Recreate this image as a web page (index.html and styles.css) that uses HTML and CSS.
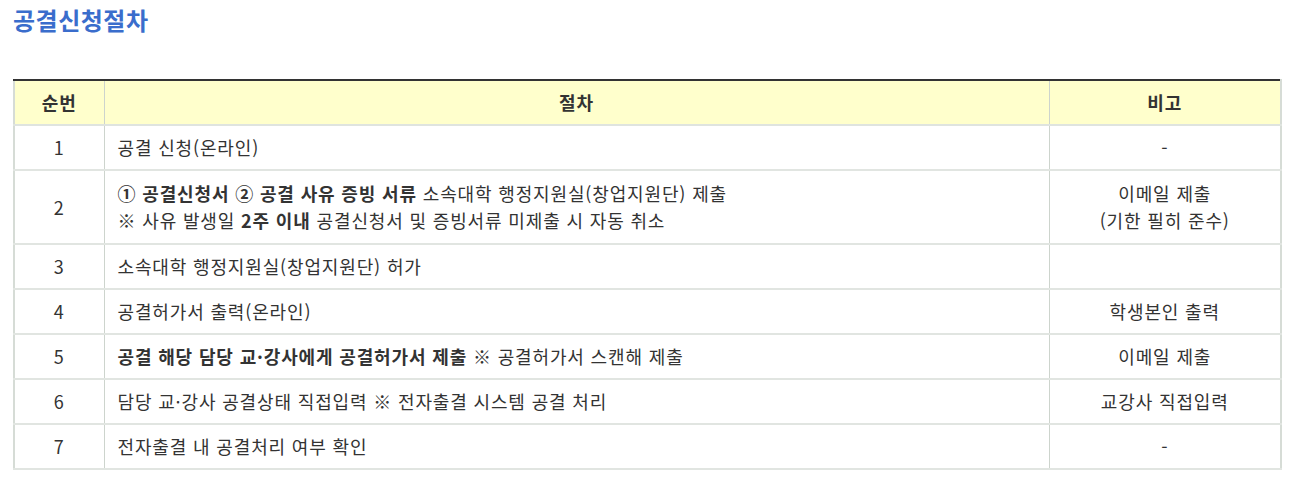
FILE: index.html
```html
<!DOCTYPE html>
<html lang="ko">
<head>
<meta charset="utf-8">
<title>공결신청절차</title>
<link rel="stylesheet" href="styles.css">
</head>
<body>
<div class="page">
  <h2 class="title">공결신청절차</h2>
  <table class="proc">
    <colgroup>
      <col class="c-no">
      <col class="c-step">
      <col class="c-note">
    </colgroup>
    <thead>
      <tr><th>순번</th><th>절차</th><th>비고</th></tr>
    </thead>
    <tbody>
      <tr><td class="ctr">1</td><td>공결 신청(온라인)</td><td class="ctr">-</td></tr>
      <tr class="tall"><td class="ctr">2</td><td><b>① 공결신청서 ② 공결 사유 증빙 서류</b> 소속대학 행정지원실(창업지원단) 제출<br>※ 사유 발생일 <b>2주 이내</b> 공결신청서 및 증빙서류 미제출 시 자동 취소</td><td class="ctr">이메일 제출<br>(기한 필히 준수)</td></tr>
      <tr><td class="ctr">3</td><td>소속대학 행정지원실(창업지원단) 허가</td><td class="ctr"></td></tr>
      <tr><td class="ctr">4</td><td>공결허가서 출력(온라인)</td><td class="ctr">학생본인 출력</td></tr>
      <tr><td class="ctr">5</td><td><b>공결 해당 담당 교·강사에게 공결허가서 제출</b> ※ 공결허가서 스캔해 제출</td><td class="ctr">이메일 제출</td></tr>
      <tr><td class="ctr">6</td><td>담당 교·강사 공결상태 직접입력 ※ 전자출결 시스템 공결 처리</td><td class="ctr">교강사 직접입력</td></tr>
      <tr><td class="ctr">7</td><td>전자출결 내 공결처리 여부 확인</td><td class="ctr">-</td></tr>
    </tbody>
  </table>
</div>
</body>
</html>
```
FILE: styles.css
```css
html, body {
  margin: 0;
  padding: 0;
  background: #fff;
}
body {
  font-family: "Noto Sans CJK KR", "Noto Sans", sans-serif;
  color: #333;
}
.page {
  padding: 4px 9px 0 13px;
}
.title {
  margin: 0;
  font-size: 24px;
  line-height: 32px;
  font-weight: 700;
  color: #3a6dcc;
  letter-spacing: 0.5px;
}
.proc {
  margin-top: 43px;
  width: 1269px;
  border-collapse: collapse;
  table-layout: fixed;
  font-size: 18px;
  border-top: 2px solid #333;
  border-left: 2px solid #d6dcd6;
  border-right: 2px solid #d6dcd6;
}
.c-no { width: 90px; }
.c-note { width: 232px; }
.proc th {
  background: #ffffcc;
  font-weight: 700;
  height: 43px;
  padding: 0;
  text-align: center;
  border-bottom: 2px solid #dfe4df;
  border-right: 1px solid #cdd4cd;
  line-height: 27px;
  letter-spacing: 0.85px;
}
.proc td {
  padding: 8px 13px 8px 13px;
  line-height: 27px;
  border-bottom: 2px solid #e1e5e1;
  border-right: 1px solid #cdd4cd;
  vertical-align: middle;
  letter-spacing: 0.85px;
}
.proc tr.tall td { padding-top: 9px; padding-bottom: 9px; }
.proc th:last-child, .proc td:last-child { border-right: none; }
.proc td.ctr { text-align: center; padding-left: 0; padding-right: 0; }
.proc b { font-weight: 700; }
```
